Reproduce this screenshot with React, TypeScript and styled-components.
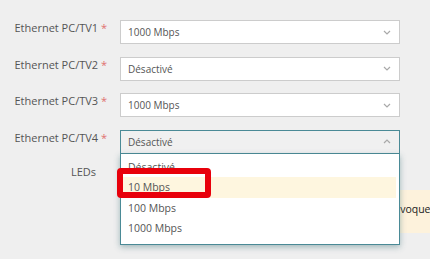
import React from 'react';
import styled, {createGlobalStyle} from "styled-components";

const GlobalStyle = createGlobalStyle`
  body {
    margin: 0;
    background: #efefef;
    font-family: "Open Sans", "Noto Sans", sans-serif;
  }
`

const options = ["Désactivé", "10 Mbps", "100 Mbps", "1000 Mbps"];

const rows = [
    {label: "Ethernet PC/TV1", value: "1000 Mbps"},
    {label: "Ethernet PC/TV2", value: "Désactivé"},
    {label: "Ethernet PC/TV3", value: "1000 Mbps"},
];

const Chevron = ({up}: { up?: boolean }) => (
    <svg width="8" height="5" viewBox="0 0 8 5">
        <path d={up ? "M1 4 L4 1 L7 4" : "M1 1 L4 4 L7 1"} fill="none" stroke="#a9a9a9" strokeWidth="1.2"/>
    </svg>
);

export default function App() {
    return (
        <>
            <GlobalStyle/>
            <Form>
                {rows.map(r => (
                    <Row key={r.label}>
                        <Label>{r.label} <Star>*</Star></Label>
                        <Select>
                            <span>{r.value}</span>
                            <Chevron/>
                        </Select>
                    </Row>
                ))}
                <Row>
                    <Label>Ethernet PC/TV4 <Star>*</Star></Label>
                    <SelectWrap>
                        <Select open>
                            <span>Désactivé</span>
                            <Chevron up/>
                        </Select>
                        <Menu>
                            {options.map(o => (
                                <Option key={o} active={o === "10 Mbps"}>{o}</Option>
                            ))}
                        </Menu>
                        <Highlight/>
                    </SelectWrap>
                </Row>
                <LedsRow>
                    <LedsLabel>LEDs</LedsLabel>
                    <Notice>Désactiver les LEDs peut provoquer</Notice>
                </LedsRow>
            </Form>
        </>
    );
}

const Form = styled.div`
  box-sizing: border-box;
  width: 430px;
  height: 259px;
  overflow: hidden;
  padding: 20px 0 0;
  display: flex;
  flex-direction: column;
  gap: 12.5px;
`

const Row = styled.div`
  display: grid;
  grid-template-columns: 107px 280px;
  column-gap: 13px;
  align-items: start;
  height: 24px;
  flex-shrink: 0;
`

const Label = styled.div`
  text-align: right;
  font-size: 11px;
  color: #555;
  line-height: 16px;
  white-space: nowrap;
`

const Star = styled.span`
  color: #e07070;
`

const SelectWrap = styled.div`
  position: relative;
  z-index: 2;
`

const Select = styled.div<{ open?: boolean }>`
  box-sizing: border-box;
  height: 24px;
  background: ${p => p.open ? "#f0f0f0" : "#fff"};
  border: 1px solid ${p => p.open ? "#4a8a96" : "#cccccc"};
  display: flex;
  align-items: center;
  justify-content: space-between;
  padding: 0 8px 0 7px;
  font-size: 10px;
  color: #555;
`

const Menu = styled.div`
  box-sizing: border-box;
  background: #fff;
  border: 1px solid #4a8a96;
  border-top: none;
  padding: 3px 3px 5px 0;
  box-shadow: 0 2px 6px rgba(60, 110, 120, 0.45);
`

const Option = styled.div<{ active?: boolean }>`
  height: 20.5px;
  line-height: 20.5px;
  padding-left: 7px;
  font-size: 10.5px;
  color: #555;
  background: ${p => p.active ? "#fef6df" : "transparent"};
`

const Highlight = styled.div`
  position: absolute;
  left: -3px;
  top: 38px;
  width: 94px;
  height: 30px;
  box-sizing: border-box;
  border: 6px solid #e8000b;
  border-radius: 4px;
`

const LedsRow = styled.div`
  display: grid;
  grid-template-columns: 107px 1fr;
  column-gap: 13px;
  margin-top: -2px;
  flex-shrink: 0;
`

const LedsLabel = styled.div`
  font-size: 11px;
  color: #555;
  line-height: 16px;
  padding-right: 11px;
  text-align: right;
`

const Notice = styled.div`
  margin-top: 26px;
  height: 43px;
  box-sizing: border-box;
  background: #fdf2dc;
  font-size: 10.5px;
  color: #222;
  line-height: 16px;
  padding: 11px 0 0 141px;
  white-space: nowrap;
  width: 400px;
`
